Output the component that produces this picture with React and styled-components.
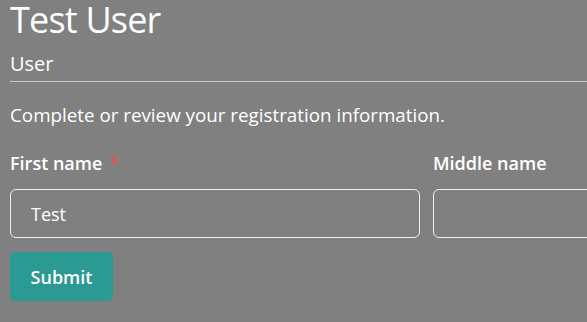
import styled, { createGlobalStyle } from "styled-components";

const GlobalStyle = createGlobalStyle`
  body {
    margin: 0;
    background: #808080;
    font-family: "Open Sans", "Noto Sans", sans-serif;
    color: #ffffff;
  }
`;

const Page = styled.div`
  padding: 0 10px;
  overflow: hidden;
`;

const Title = styled.h1`
  margin: 0;
  font-size: 36px;
  font-weight: 400;
  letter-spacing: -0.8px;
  line-height: 40px;
`;

const Subtitle = styled.div`
  margin: 10px -10px 0 0;
  font-size: 20px;
  line-height: 28px;
  padding-bottom: 3px;
  border-bottom: 1px solid #c8c8c8;
`;

const Intro = styled.p`
  margin: 20px 0 0;
  font-size: 18.8px;
  line-height: 26px;
`;

const Fields = styled.div`
  display: grid;
  grid-template-columns: 410px 410px;
  column-gap: 13px;
  margin-top: 23px;
`;

const Field = styled.div`
  display: flex;
  flex-direction: column;
`;

const Label = styled.label`
  font-size: 18px;
  font-weight: 600;
  line-height: 24px;
  margin-bottom: 14px;
`;

const Required = styled.span`
  color: #e05555;
  margin-left: 7px;
`;

const Input = styled.input`
  box-sizing: border-box;
  height: 49px;
  border: 1px solid #f0f0f0;
  border-radius: 6px;
  background: transparent;
  color: #ffffff;
  font-family: inherit;
  font-size: 18px;
  padding: 0 20px;
  outline: none;
`;

const Button = styled.button`
  margin-top: 14px;
  width: 103px;
  height: 49px;
  border: none;
  border-radius: 5px;
  background: #2b9a93;
  color: #ffffff;
  font-family: inherit;
  font-size: 18px;
  font-weight: 600;
`;

export default function App() {
  return (
    <>
      <GlobalStyle />
      <Page>
        <Title>Test User</Title>
        <Subtitle>User</Subtitle>
        <Intro>Complete or review your registration information.</Intro>
        <Fields>
          <Field>
            <Label>
              First name<Required>*</Required>
            </Label>
            <Input defaultValue="Test" />
          </Field>
          <Field>
            <Label>Middle name</Label>
            <Input />
          </Field>
        </Fields>
        <Button>Submit</Button>
      </Page>
    </>
  );
}
